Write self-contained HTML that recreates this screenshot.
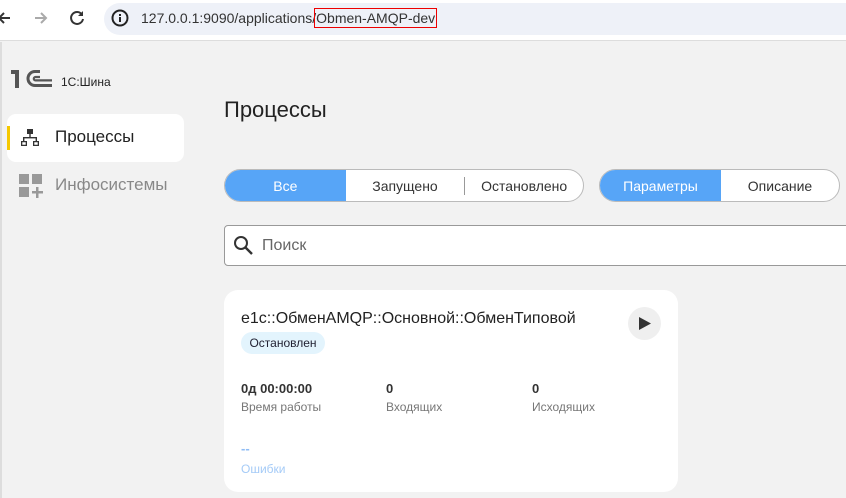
<!DOCTYPE html>
<html><head><meta charset="utf-8"><style>
*{box-sizing:border-box;margin:0;padding:0}
body{width:846px;height:498px;overflow:hidden;background:#f2f2f2;font-family:"Liberation Sans","Noto Sans CJK SC",sans-serif;position:relative;color:#222}
.abs{position:absolute}
.bar{left:0;top:0;width:846px;height:41px;background:#fff;border-bottom:1px solid #ddd}
.url{left:104px;top:3px;width:760px;height:32px;border-radius:16px;background:#eef1f8}
.seg{border:1px solid #bbb;border-radius:18px;overflow:hidden;display:flex;height:33px;background:#fff;font-size:14px}
.seg div{display:flex;align-items:center;justify-content:center;color:#333}
.seg .on{background:#57a5f7;color:#fff}
</style></head><body>
<div class="abs" style="left:0;top:42px;width:2px;height:456px;background:#ddd"></div>
<div class="abs bar"></div>
<svg class="abs" style="left:-4px;top:10px" width="16" height="16"><path d="M14 8H3M8 3L3 8l5 5" fill="none" stroke="#333" stroke-width="2"/></svg>
<svg class="abs" style="left:33px;top:10px" width="16" height="16"><path d="M2 8h11M8 3l5 5-5 5" fill="none" stroke="#aaa" stroke-width="2"/></svg>
<svg class="abs" style="left:68px;top:9px" width="18" height="18"><path d="M14 5.5A6 6 0 1 0 15 10" fill="none" stroke="#333" stroke-width="2"/><path d="M15 2v5h-5z" fill="#333"/></svg>
<div class="abs url"></div>
<svg class="abs" style="left:111px;top:9px" width="18" height="18"><circle cx="9" cy="9" r="7.5" fill="none" stroke="#222" stroke-width="2"/><rect x="8" y="8" width="2" height="5" fill="#222"/><rect x="8" y="5" width="2" height="2" fill="#222"/></svg>
<div class="abs" style="left:141px;top:10px;font-size:14px;color:#333">127.0.0.1:9090/applications/<span style="outline:1px solid #e00;outline-offset:1px">Obmen-AMQP-dev</span></div>

<svg class="abs" style="left:10px;top:68px" width="44" height="22" viewBox="0 0 44 22"><g fill="#555"><path d="M1 2h8v18H5V6H1z"/></g><g fill="none" stroke="#555"><path d="M30 3.5H25a7 7 0 0 0 0 14H42" stroke-width="3"/><path d="M30 9H25.5a1.7 1.7 0 0 0 0 3.4H42" stroke-width="2.2"/></g></svg>
<div class="abs" style="left:61px;top:75px;font-size:12px;color:#222">1С:Шина</div>

<div class="abs" style="left:7px;top:114px;width:177px;height:48px;background:#fff;border-radius:9px"></div>
<div class="abs" style="left:7px;top:126px;width:3px;height:24px;background:#f5c800"></div>
<svg class="abs" style="left:21px;top:129px" width="18" height="18" viewBox="0 0 18 18"><g fill="#333"><rect x="6" y="0" width="6" height="5"/><rect x="8.3" y="5" width="1.4" height="4"/><rect x="2" y="8" width="14" height="1.4"/><rect x="2" y="8" width="1.4" height="4"/><rect x="14.6" y="8" width="1.4" height="4"/><path d="M0 12h6v5H0zM1.3 13.3v2.4h3.4v-2.4z"/><path d="M12 12h6v5h-6zM13.3 13.3v2.4h3.4v-2.4z"/></g></svg>
<div class="abs" style="left:55px;top:127px;font-size:17px;color:#222">Процессы</div>
<svg class="abs" style="left:19px;top:174px" width="24" height="24" viewBox="0 0 24 24"><g fill="#999"><rect x="0" y="0" width="10" height="10"/><rect x="13" y="0" width="10" height="10"/><rect x="0" y="13" width="10" height="10"/><rect x="17" y="13" width="2.5" height="11"/><rect x="13" y="17" width="11" height="2.5"/></g></svg>
<div class="abs" style="left:55px;top:175px;font-size:17px;color:#888">Инфосистемы</div>

<div class="abs" style="left:224px;top:97px;font-size:22px;color:#222">Процессы</div>

<div class="abs seg" style="left:224px;top:169px;width:360px"><div class="on" style="width:121px">Все</div><div style="width:119px">Запущено</div><div style="width:1px;height:18px;background:#999;align-self:center"></div><div style="width:118px">Остановлено</div></div>
<div class="abs seg" style="left:599px;top:169px;width:241px"><div class="on" style="width:121px">Параметры</div><div style="width:118px">Описание</div></div>

<div class="abs" style="left:224px;top:225px;width:640px;height:41px;background:#fff;border:1px solid #999;border-radius:4px"></div>
<svg class="abs" style="left:233px;top:235px" width="22" height="22" viewBox="0 0 22 22"><circle cx="8" cy="8" r="6" fill="none" stroke="#333" stroke-width="2"/><path d="M12.5 12.5L19 19" stroke="#333" stroke-width="2.4"/></svg>
<div class="abs" style="left:262px;top:237px;font-size:16px;color:#666">Поиск</div>

<div class="abs" style="left:224px;top:290px;width:454px;height:202px;background:#fff;border-radius:14px"></div>
<div class="abs" style="left:241px;top:310px;font-size:16px;color:#222">e1c::ОбменAMQP::Основной::ОбменТиповой</div>
<div class="abs" style="left:628px;top:307px;width:33px;height:33px;border-radius:50%;background:#efefef"></div>
<svg class="abs" style="left:638px;top:316px" width="14" height="15"><path d="M1 1L13 7.5 1 14z" fill="#333"/></svg>
<div class="abs" style="left:241px;top:332px;width:84px;height:22px;border-radius:11px;background:#e3f4fd;font-size:12px;color:#223;line-height:22px;text-align:center">Остановлен</div>
<div class="abs" style="left:241px;top:381px;font-size:13px;font-weight:bold;color:#333">0д 00:00:00</div>
<div class="abs" style="left:386px;top:381px;font-size:13px;font-weight:bold;color:#333">0</div>
<div class="abs" style="left:532px;top:381px;font-size:13px;font-weight:bold;color:#333">0</div>
<div class="abs" style="left:241px;top:400px;font-size:12px;color:#777">Время работы</div>
<div class="abs" style="left:386px;top:400px;font-size:12px;color:#777">Входящих</div>
<div class="abs" style="left:532px;top:400px;font-size:12px;color:#777">Исходящих</div>
<div class="abs" style="left:241px;top:441px;font-size:13px;font-weight:bold;color:#8fbcf5">--</div>
<div class="abs" style="left:241px;top:462px;font-size:12px;color:#a5cbf7">Ошибки</div>
</body></html>
